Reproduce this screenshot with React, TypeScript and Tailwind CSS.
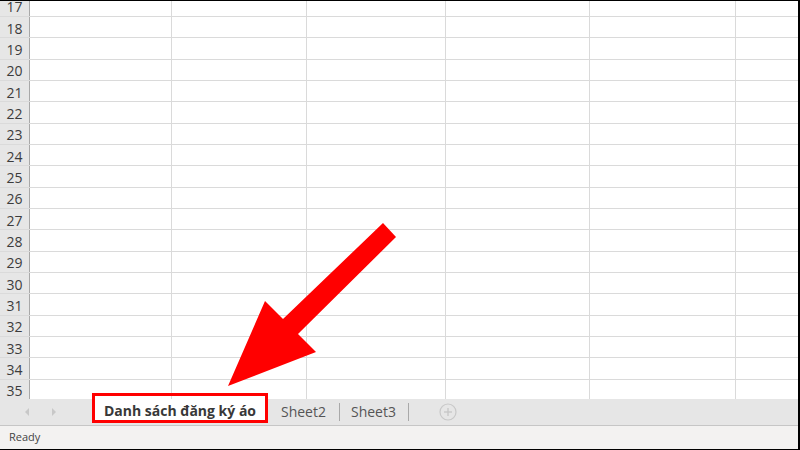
import React from "react";

const colWidths = [142, 135, 139, 144, 146];

function Row({ label, first }: { label: number; first?: boolean }) {
  return (
    <div
      className={
        "flex shrink-0 h-[21.333px] border-b border-[#dadada] " +
        (first ? "mt-[-5.333px]" : "")
      }
    >
      <div className="w-[30px] shrink-0 bg-[#e6e6e6] border-r border-[#a8a8a8] flex justify-center items-center leading-none pt-[3px] text-[14px] text-[#3c3c3c]">
        {label}
      </div>
      {colWidths.map((w, i) => (
        <div
          key={i}
          className="shrink-0 border-r border-[#dadada]"
          style={{ width: w }}
        />
      ))}
      <div className="flex-1" />
    </div>
  );
}

export default function App() {
  const rows = Array.from({ length: 19 }, (_, i) => 17 + i);
  return (
    <div
      className="relative w-[800px] h-[450px] overflow-hidden bg-white border-t border-r-2 border-b border-black flex flex-col"
      style={{ fontFamily: '"Open Sans", "Noto Sans", sans-serif' }}
    >
      {/* grid */}
      <div className="h-[398px] shrink-0 overflow-hidden flex flex-col">
        {rows.map((r, i) => (
          <Row key={r} label={r} first={i === 0} />
        ))}
      </div>

      {/* sheet tab bar */}
      <div className="h-[27px] shrink-0 bg-[#e6e6e6] border-b border-[#c6c6c6] flex items-stretch">
        <div className="w-[95px] shrink-0 flex items-center pl-[25px] gap-[21px] pb-[1px]">
          <svg width="5" height="8" viewBox="0 0 5 8">
            <polygon points="4,0 0,4 4,8" fill="#c8c8c8" />
          </svg>
          <svg width="5" height="8" viewBox="0 0 5 8">
            <polygon points="1,0 5,4 1,8" fill="#c8c8c8" />
          </svg>
        </div>
        <div className="w-[170px] h-[24px] self-start shrink-0 bg-white border-b-2 border-[#217346] flex items-center pl-[9px] text-[14px] font-bold text-[#383838]">
          Danh sách đăng ký áo
        </div>
        <div className="flex items-center pl-[16px] pr-[13px] text-[14px] text-[#555555] pb-[2px]">
          Sheet2
        </div>
        <div className="w-px bg-[#a9a9a9] my-[4px] shrink-0" />
        <div className="flex items-center pl-[11px] pr-[12px] text-[14px] text-[#555555] pb-[2px]">
          Sheet3
        </div>
        <div className="w-px bg-[#a9a9a9] my-[4px] shrink-0" />
        <div className="flex items-center pl-[30px]">
          <svg width="18" height="18" viewBox="0 0 18 18">
            <circle cx="9" cy="9" r="8" fill="none" stroke="#c8c8c8" strokeWidth="1.2" />
            <line x1="5" y1="9" x2="13" y2="9" stroke="#c8c8c8" strokeWidth="1.4" />
            <line x1="9" y1="5" x2="9" y2="13" stroke="#c8c8c8" strokeWidth="1.4" />
          </svg>
        </div>
      </div>

      {/* status bar */}
      <div className="flex-1 bg-[#f3f2f1] flex items-center pl-[9px] text-[11px] text-[#444444]">
        Ready
      </div>

      {/* red highlight box */}
      <div className="absolute left-[92px] top-[392px] w-[176px] h-[30px] border-[3px] border-[#ff0000]" />

      {/* red arrow */}
      <svg
        className="absolute left-0 top-[-1px] pointer-events-none"
        width="800"
        height="450"
        viewBox="0 0 800 450"
      >
        <polygon
          points="383,223 396,237 298,334 316,352 228,386 265,301 283,319"
          fill="#ff0000"
        />
      </svg>
    </div>
  );
}
